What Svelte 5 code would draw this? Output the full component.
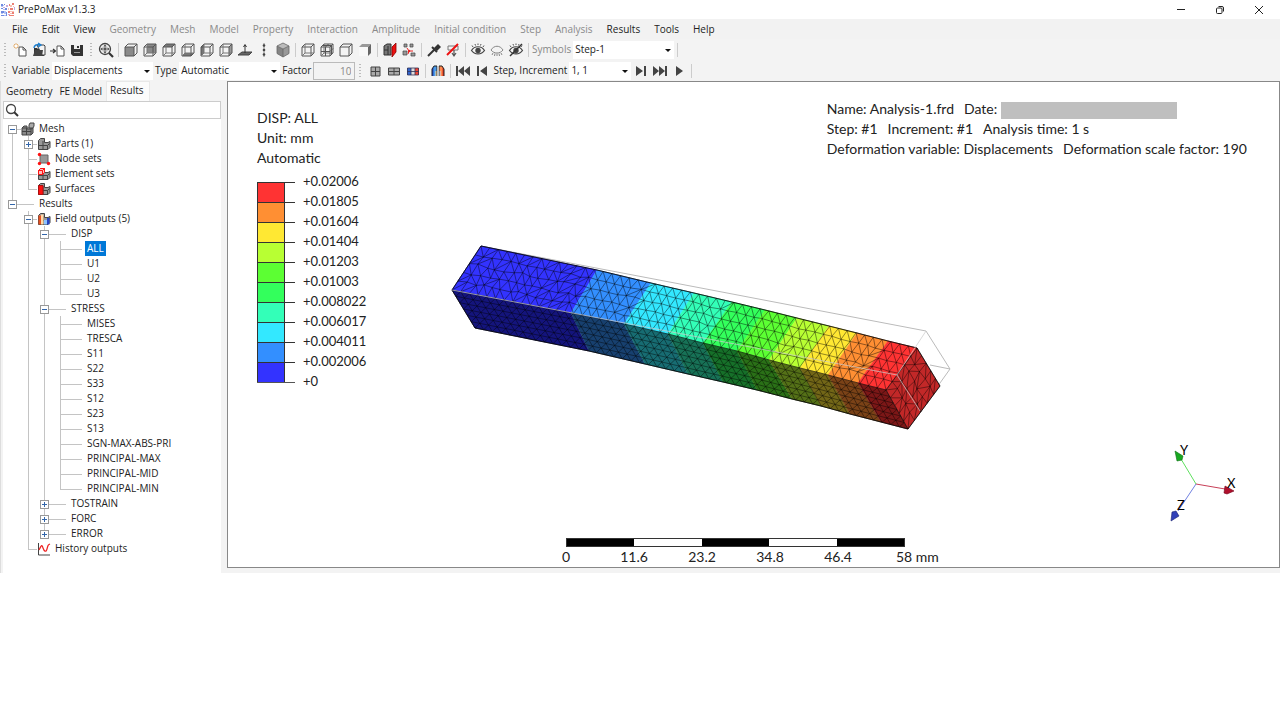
<script>
  const menus = [
    ['File', true], ['Edit', true], ['View', true], ['Geometry', false], ['Mesh', false],
    ['Model', false], ['Property', false], ['Interaction', false], ['Amplitude', false],
    ['Initial condition', false], ['Step', false], ['Analysis', false],
    ['Results', true], ['Tools', true], ['Help', true]
  ];

  const leaf = (label) => ({ label });
  let tree = $state([
    {
      label: 'Mesh', icon: 'mesh', open: true, children: [
        { label: 'Parts (1)', icon: 'part', open: false, children: [] },
        { label: 'Node sets', icon: 'nodes' },
        { label: 'Element sets', icon: 'elements' },
        { label: 'Surfaces', icon: 'surface' }
      ]
    },
    {
      label: 'Results', open: true, children: [
        {
          label: 'Field outputs (5)', icon: 'field', open: true, children: [
            { label: 'DISP', open: true, children: ['ALL', 'U1', 'U2', 'U3'].map(leaf) },
            {
              label: 'STRESS', open: true,
              children: ['MISES', 'TRESCA', 'S11', 'S22', 'S33', 'S12', 'S23', 'S13', 'SGN-MAX-ABS-PRI',
                'PRINCIPAL-MAX', 'PRINCIPAL-MID', 'PRINCIPAL-MIN'].map(leaf)
            },
            { label: 'TOSTRAIN', open: false, children: [] },
            { label: 'FORC', open: false, children: [] },
            { label: 'ERROR', open: false, children: [] }
          ]
        },
        { label: 'History outputs', icon: 'history' }
      ]
    }
  ]);
  let selected = $state('ALL');
  let tab = $state('Results');

  const legendColors = ['#ff3333', '#ff8f33', '#ffe833', '#b8ff33', '#5cff33', '#33ff5c', '#33ffb8', '#33e8ff', '#338fff', '#3333ff'];
  const legendValues = ['+0.02006', '+0.01805', '+0.01604', '+0.01404', '+0.01203', '+0.01003', '+0.008022', '+0.006017', '+0.004011', '+0.002006', '+0'];
  const topColors = [...legendColors].reverse();
  const sideColors = ['#14147c', '#17406f', '#176c72', '#177156', '#167029', '#2a7017', '#547017', '#726617', '#7a4217', '#7c1717'];

  // Beam edges, sampled where the contour bands meet them.
  const back = [[481, 246], [597, 270], [651, 283], [694, 293], [732, 302], [765, 310], [797, 318], [829, 326], [857, 333], [888, 341], [917, 348]];
  const front = [[452, 290], [571, 313], [624, 324], [668, 334], [703, 343], [737, 351], [769, 360], [800, 368], [828, 375], [858, 383], [886, 390]];
  const under = [[475, 328], [589, 351], [645, 364], [688, 374], [723, 382], [757, 390], [792, 399], [821, 406], [850, 414], [881, 422], [908, 429]];

  const pts = (list) => list.map((p) => p.join(',')).join(' ');
  const bands = (a, b, colors) => colors.map((fill, i) => ({ fill, points: pts([a[i], a[i + 1], b[i + 1], b[i]]) }));

  function at(edge, s) {
    const x = edge[0][0] + (edge[10][0] - edge[0][0]) * s;
    let i = 0;
    while (i < 9 && edge[i + 1][0] < x) i++;
    const [x0, y0] = edge[i];
    const [x1, y1] = edge[i + 1];
    return [x, y0 + ((y1 - y0) * (x - x0)) / (x1 - x0)];
  }
  const noise = (n) => { const v = Math.sin(n * 127.1) * 43758.5453; return v - Math.floor(v) - 0.5; };

  // Triangulated wire grid between two edges; lean picks the diagonal.
  function wires(edgeA, edgeB, cols, rows, lean, jitter) {
    const grid = [];
    for (let j = 0; j <= rows; j++) {
      const line = [];
      for (let i = 0; i <= cols; i++) {
        const a = edgeA(i / cols);
        const b = edgeB(i / cols);
        const t = j / rows;
        const k = i > 0 && i < cols && j > 0 && j < rows ? jitter(i) : 0;
        line.push([
          (a[0] + (b[0] - a[0]) * t + noise(i * 13 + j * 7 + 1) * k).toFixed(1),
          (a[1] + (b[1] - a[1]) * t + noise(i * 5 + j * 31 + 2) * k).toFixed(1)
        ]);
      }
      grid.push(line);
    }
    let d = '';
    for (const line of grid) d += 'M' + line.join('L');
    for (let i = 0; i <= cols; i++) d += 'M' + grid.map((line) => line[i]).join('L');
    for (let j = 0; j < rows; j++)
      for (let i = 0; i < cols; i++) {
        const flip = jitter(i) > 2 && noise(i * 3 + j * 11) > 0.2 ? !lean : lean;
        d += flip ? `M${grid[j][i]}L${grid[j + 1][i + 1]}` : `M${grid[j][i + 1]}L${grid[j + 1][i]}`;
      }
    return d;
  }
  const segment = (a, b) => (s) => [a[0] + (b[0] - a[0]) * s, a[1] + (b[1] - a[1]) * s];
  const topWires = wires((s) => at(back, s), (s) => at(front, s), 50, 5, true, (i) => (i < 14 ? 3 : i % 9 < 2 ? 3 : 1));
  const sideWires = wires((s) => at(front, s), (s) => at(under, s), 50, 6, false, () => 0);
  const endWires = wires(segment([917, 348], [940, 386]), segment([886, 390], [908, 429]), 5, 5, true, () => 3);
</script>

{#snippet cube(face)}
  <svg viewBox="0 0 16 16">
    {#if face === 'front'}<path d="M2 5h9v9H2z" fill="#8a8a8a" />{/if}
    {#if face === 'back'}<path d="M5 2h9v9H5z" fill="#8a8a8a" />{/if}
    {#if face === 'top'}<path d="M2 5l3-3h9l-3 3z" fill="#777" />{/if}
    {#if face === 'bottom'}<path d="M2 14l3-3h9l-3 3z" fill="#777" />{/if}
    {#if face === 'left'}<path d="M2 5l3-3v9l-3 3z" fill="#777" />{/if}
    {#if face === 'right'}<path d="M11 5l3-3v9l-3 3z" fill="#999" />{/if}
    <path d="M2 5h9v9H2zM2 5l3-3h9v9l-3 3M11 5l3-3" fill="none" stroke="#555" />
    {#if face !== 'solid' && face !== 'front'}<path d="M5 2v9h9M5 11l-3 3" fill="none" stroke="#777" />{/if}
    {#if face === 'grid'}<path d="M6.500 5v9M2 9.500h9l3-3M6.500 5l3-3M12.500 3.500v9M3.500 3.500h9" fill="none" stroke="#555" />{/if}
  </svg>
{/snippet}

{#snippet tool(name)}
  {#if name.startsWith('cube-')}
    {@render cube(name.slice(5))}
  {:else}
    <svg viewBox="0 0 16 16">
      {#if name === 'new'}
        <path d="M7 5h4l3 3v6H7z" fill="#fff" stroke="#555" /><path d="M11 5v3h3" fill="none" stroke="#555" />
        <path d="M4 1v6M1 4h6M2 2l4 4M6 2L2 6" stroke="#e0a050" stroke-width=".8" /><circle cx="4" cy="4" r="1.300" fill="#fff" />
      {:else if name === 'open'}
        <path d="M3 6h3l1 1h6v7H3z" fill="#333" /><path d="M6 3h7l1 1v9h-3z" fill="#f4f4f4" stroke="#444" /><path d="M2 14l2-6h8l-1 6z" fill="#444" />
        <path d="M3 6c0-3 3-4 6-3M7 1l3 2-3 2" fill="none" stroke="#1d7fd0" stroke-width="1.400" />
      {:else if name === 'import'}
        <path d="M7 4h4l3 3v7H7z" fill="#fff" stroke="#555" /><path d="M11 4v3h3" fill="none" stroke="#555" /><path d="M0 9h5M3 7l2.500 2L3 11" fill="none" stroke="#333" stroke-width="1.200" />
      {:else if name === 'save'}
        <path d="M2 3h12v11H4l-2-2z" fill="#333" /><path d="M5 3h6v4H5z" fill="#eee" /><path d="M8 4h2v2H8z" fill="#333" /><path d="M5 10h6v1H5z" fill="#999" />
      {:else if name === 'fit'}
        <circle cx="7" cy="7" r="5.500" fill="#e8e8e8" stroke="#444" stroke-width="1.300" /><path d="M11 11l4 4" stroke="#333" stroke-width="2.200" />
        <path d="M7 2.500l1.500 2h-3zM7 11.500l1.500-2h-3zM2.500 7l2-1.500v3zM11.500 7l-2-1.500v3z" fill="#333" /><path d="M5.500 5.500h3v3h-3z" fill="#555" />
      {:else if name === 'normal'}
        <path d="M1 13l4-3h10l-3 3z" fill="#666" stroke="#444" /><path d="M8 11V3M6.500 5L8 2.500 9.500 5" stroke="#333" fill="none" />
      {:else if name === 'vertical'}
        <path d="M8 1v14" stroke="#888" /><circle cx="8" cy="3.500" r="1.300" fill="#444" /><circle cx="8" cy="8" r="1.300" fill="#444" /><circle cx="8" cy="12.500" r="1.300" fill="#444" />
      {:else if name === 'iso'}
        <path d="M8 1l6 3-6 3-6-3z" fill="#bbb" /><path d="M2 4l6 3v8l-6-3.500z" fill="#858585" /><path d="M14 4L8 7v8l6-3.500z" fill="#999" />
        <path d="M8 1l6 3v7.500L8 15l-6-3.500V4zM2 4l6 3 6-3M8 7v8" fill="none" stroke="#666" stroke-width=".8" />
      {:else if name === 'shaded'}
        <path d="M2 5l3-3h9l-3 3z" fill="#999" /><path d="M11 5l3-3v9l-3 3z" fill="#666" /><path d="M2 5h9v9H2z" fill="#f8f8f8" />
      {:else if name === 'section'}
        <path d="M2 4l3-2h4v11H2z" fill="#777" stroke="#333" /><path d="M10 5l4-4v9l-4 5z" fill="#e11" stroke="#800" stroke-width=".8" /><path d="M2 8h4M6 4v9" stroke="#333" />
      {:else if name === 'explode'}
        <path d="M3 2h3v3H3zM9 2h3v3H9zM2 9h4v4H2zM10 11h4v3h-4z" fill="#999" stroke="#444" stroke-width=".7" /><path d="M8 9l-2-3M9 9h3M8 9l-1 3" stroke="#e22" /><circle cx="8" cy="9" r="1.200" fill="#e22" />
      {:else if name === 'query'}
        <path d="M2 14l7-7" stroke="#333" stroke-width="2" /><path d="M6 5l5 5" stroke="#333" stroke-width="2" /><path d="M8 6l4-4 3 3-4 4z" fill="#333" />
      {:else if name === 'unquery'}
        <path d="M3 4h10v4H3z" fill="none" stroke="#777" /><path d="M9 8v6M7 11l2 3 2-3" fill="none" stroke="#555" stroke-width="1.200" /><path d="M2 13L13 2" stroke="#e11" stroke-width="2" />
      {:else if name === 'eye' || name === 'eye-off' || name === 'eye-closed'}
        {#if name === 'eye-closed'}
          <path d="M2 8c3-5 9-5 12 0-3 4-9 4-12 0zM4 11l-1 2M8 11.500V14M12 11l1 2M6 11.500L5.500 14M10 11.500l.5 2.500" fill="none" stroke="#888" />
        {:else}
          <path d="M1.500 8.500c3-5 10-5 13 0-3 4.500-10 4.500-13 0z" fill="#f5f5f5" stroke="#444" stroke-width="1.200" /><circle cx="8" cy="8.500" r="2.700" fill="#444" />
          <path d="M3 5L2 3.500M5.500 3.500L5 2M8 3V1.500M10.500 3.500L11 2M13 5l1-1.500" stroke="#555" />
          {#if name === 'eye-off'}<path d="M2 14L14 2" stroke="#333" stroke-width="1.500" />{/if}
        {/if}
      {:else if name === 'grid1'}
        <path d="M4 4h9v9H4z" fill="#aaa" stroke="#444" /><path d="M8.500 4v9M4 8.500h9" stroke="#444" />
      {:else if name === 'grid2'}
        <path d="M2.500 5h11v7h-11z" fill="#aaa" stroke="#444" /><path d="M8 5v7M2.500 8.500h11" stroke="#444" />
      {:else if name === 'grid3'}
        <path d="M2 5h4v7H2z" fill="#36c" /><path d="M6 5h4v7H6z" fill="#ddd" /><path d="M10 5h4v7h-4z" fill="#e43" /><path d="M2.500 5h11v7h-11zM6 5v7M10 5v7M2 8.500h12" stroke="#335" stroke-width=".8" fill="none" />
      {:else if name === 'sides'}
        <path d="M2 13V6l2-3h3v10z" fill="#4a9be8" /><path d="M2 13V6l1.500-2v9z" fill="#2347c0" /><path d="M5.500 8H7v5H5.500z" fill="#ffe0a0" />
        <path d="M14 13V6l-2-3H9v10z" fill="#ff8a50" /><path d="M14 13V6l-1.500-2v9z" fill="#d82a18" /><path d="M9 8h1.500v5H9z" fill="#bfe0ff" />
        <path d="M2 13V6l2-3h3v10M14 13V6l-2-3H9v10" fill="none" stroke="#222" /><path d="M8 2v13" stroke="#f5f5f5" />
      {:else if name === 'first'}
        <path d="M1 3h2v10H1zM9 3v10L3 8zM15 3v10L9 8z" fill="#444" />
      {:else if name === 'prev'}
        <path d="M3 3h2v10H3zM13 3v10L6 8z" fill="#444" />
      {:else if name === 'next'}
        <path d="M11 3h2v10h-2zM3 3v10l7-5z" fill="#444" />
      {:else if name === 'last'}
        <path d="M13 3h2v10h-2zM1 3v10l6-5zM7 3v10l6-5z" fill="#444" />
      {:else if name === 'play'}
        <path d="M5 3v10l7-5z" fill="#444" />
      {/if}
    </svg>
  {/if}
{/snippet}

{#snippet tools(names)}
  {#each names as name}
    <button class="tool" aria-label={name}>{@render tool(name)}</button>
  {/each}
{/snippet}

{#snippet nodeIcon(name)}
  <svg class="node-icon" viewBox="0 0 14 14">
    {#if name === 'mesh'}
      <path d="M1 6l2-2h3v3h4l2-1v5l-2 2H1z" fill="#8a8a8a" stroke="#444" /><path d="M1 9.500h9M5.500 6v7M1 6h9v7" fill="none" stroke="#444" /><path d="M8 3l1-2h4v3l-1 2H8z" fill="#aaa" stroke="#444" />
    {:else if name === 'history'}
      <path d="M1.500 1v12H13" fill="none" stroke="#444" /><path d="M2 8c3-6 3-5 4-2s3 5 4 1 1-4 3-5" fill="none" stroke="#e22" stroke-width="1.200" />
    {:else if name === 'nodes'}
      <path d="M3 3h8v8H3z" fill="#999" stroke="#666" /><circle cx="2.500" cy="2.500" r="1.700" fill="#f11" /><circle cx="2.500" cy="11.500" r="1.700" fill="#f11" /><circle cx="11.500" cy="11.500" r="1.700" fill="#f11" />
    {:else}
      <path d="M1.500 3.500l2-2h4v4H11l2-1v6l-2 2H1.500z" fill="#999" stroke="#444" /><path d="M1.500 8.500h9v4M6 4v8.500M10.500 8.500l2-2" fill="none" stroke="#444" />
      {#if name === 'elements'}<path d="M1.500 3.500l2-2h4v4l-2 2h-4zM1.500 3.500h4v4M5.500 3.500l2-2" fill="#fbb" stroke="#f11" />{/if}
      {#if name === 'surface'}<path d="M1.500 3.500H6v9H1.500z" fill="#f11" stroke="#a11" />{/if}
      {#if name === 'field'}<path d="M1.500 3.500H4v9H1.500z" fill="#e65020" /><path d="M4 2.500h2.500v10H4z" fill="#ffd9a8" /><path d="M7 8h3v4.500H7z" fill="#8fc4ff" /><path d="M10 6h2.500v6.500H10z" fill="#2747c8" />{/if}
    {/if}
  </svg>
{/snippet}

{#snippet branch(items)}
  <ul>
    {#each items as item}
      <li class:wide={!item.icon}>
        <div class="row">
          {#if item.children}
            <button class="toggle" aria-label="Toggle {item.label}" onclick={() => (item.open = !item.open)}>
              <svg viewBox="0 0 7 7"><path d={item.open ? 'M1 3.500h5' : 'M1 3.500h5M3.500 1v5'} stroke="#36a" /></svg>
            </button>
          {/if}
          {#if item.icon}{@render nodeIcon(item.icon)}{/if}
          <button class="label" class:selected={selected === item.label} onclick={() => (selected = item.label)}>{item.label}</button>
        </div>
        {#if item.open}{@render branch(item.children)}{/if}
      </li>
    {/each}
  </ul>
{/snippet}

<div class="window">
  <header class="title">
    <svg class="logo" viewBox="0 0 16 16">
      <path d="M1 2h2v2H1zM4 2h1v1H4zM1 6h2v1H1zM5 6h2v2H5zM1 9h3v2H1zM6 10h1v4H6zM1 13h3v1H1z" fill="#6f8ae0" />
      <path d="M9 2h1v2H9zM12 1h2v2h-2zM10 6h3v2h-3zM8 9h2v2H8zM12 10h2v2h-2zM9 13h5v1H9z" fill="#ec8074" />
      <path d="M6 3h2v2H6zM3 5h2v1H3zM8 12h2v1H8zM14 5h1v3h-1z" fill="#c9a8d8" />
      <path d="M3 3h1v1H3zM1 4h2v1H1zM3 7h2v1H3zM4 9h2v3H4zM1 11h2v1H1zM4 13h2v1H4z" fill="#b4c4f4" />
      <path d="M10 3h2v2h-2zM13 4h1v1h-1zM8 6h1v2H8zM10 9h4v1h-4zM10 11h2v1h-2z" fill="#f8c0b4" />
    </svg>
    <span>PrePoMax v1.3.3</span>
    <div class="window-buttons">
      <button aria-label="Minimize"><svg viewBox="0 0 10 10"><path d="M1 4.500h8" /></svg></button>
      <button aria-label="Restore"><svg viewBox="0 0 10 10"><rect x="1.500" y="3" width="5.500" height="5.500" rx="1" /><path d="M3.500 1.500H7a1.500 1.500 0 0 1 1.500 1.500v3.500" /></svg></button>
      <button aria-label="Close"><svg viewBox="0 0 10 10"><path d="M1 1l8 8M9 1L1 9" /></svg></button>
    </div>
  </header>

  <nav class="menu">
    {#each menus as [name, enabled]}<button disabled={!enabled}>{name}</button>{/each}
  </nav>

  <div class="toolbar">
    <i class="grip"></i>
    {@render tools(['new', 'open', 'import', 'save'])}
    <i class="grip inner"></i>
    {@render tools(['fit'])}<i class="sep"></i>
    {@render tools(['cube-front', 'cube-back', 'cube-top', 'cube-bottom', 'cube-left', 'cube-right', 'normal', 'vertical', 'iso'])}<i class="sep"></i>
    {@render tools(['cube-wire', 'cube-grid', 'cube-solid', 'shaded'])}<i class="sep"></i>
    {@render tools(['section', 'explode'])}<i class="sep"></i>
    {@render tools(['query', 'unquery'])}<i class="sep"></i>
    {@render tools(['eye', 'eye-closed', 'eye-off'])}<i class="sep"></i>
    <label class="muted" for="symbols">Symbols</label>
    <span class="select"><select id="symbols"><option>Step-1</option></select></span><i class="sep"></i>
  </div>

  <div class="toolbar fields">
    <i class="grip"></i>
    <label for="variable">Variable</label>
    <span class="select"><select id="variable"><option>Displacements</option></select></span>
    <label for="type">Type</label>
    <span class="select"><select id="type"><option>Automatic</option></select></span>
    <label for="factor">Factor</label>
    <input id="factor" class="factor" value="10" disabled />
    <i class="grip inner"></i>
    {@render tools(['grid1', 'grid2', 'grid3'])}<i class="sep"></i>
    {@render tools(['sides'])}<i class="sep"></i>
    {@render tools(['first', 'prev'])}
    <label for="increment">Step, Increment</label>
    <span class="select small"><select id="increment"><option>1, 1</option></select></span>
    {@render tools(['next', 'last', 'play'])}<i class="sep"></i>
  </div>

  <main>
    <aside>
      <div class="tabs" role="tablist">
        {#each ['Geometry', 'FE Model', 'Results'] as name}
          <button role="tab" aria-selected={tab === name} onclick={() => (tab = name)}>{name}</button>
        {/each}
      </div>
      <div class="search">
        <svg viewBox="0 0 14 14"><circle cx="6" cy="6" r="4.500" fill="none" stroke="#444" stroke-width="1.300" /><path d="M9 9l4 4" stroke="#333" stroke-width="2" /></svg>
        <input type="search" aria-label="Search tree" />
      </div>
      <div class="tree">{@render branch(tree)}</div>
    </aside>

    <section class="view">
      <svg class="beam" viewBox="440 235 520 205">
        <path d="M481 246L926 331L950 369L930 365M950 369L920 411" fill="none" stroke="#bbb" />
        {#each bands(front, under, sideColors) as band}<polygon points={band.points} fill={band.fill} stroke={band.fill} stroke-width=".5" />{/each}
        {#each bands(back, front, topColors) as band}<polygon points={band.points} fill={band.fill} stroke={band.fill} stroke-width=".5" />{/each}
        <polygon points="917,348 940,386 908,429 886,390" fill="#c22828" />
        <g fill="none" stroke="#000">
          <path d={topWires} stroke-opacity=".62" stroke-width=".7" />
          <path d={sideWires} stroke-opacity=".6" stroke-width=".7" />
          <path d={endWires} stroke-opacity=".6" stroke-width=".7" />
          <g stroke-width=".7">
            <polyline points={pts(back)} /><polyline points={pts(under)} />
            <path d="M481 246L452 290L475 328M917 348L940 386L908 429" />
          </g>
        </g>
        <path d="M452 290L897 375L920 411M897 375L926 331" fill="none" stroke="#ccc" stroke-opacity=".8" stroke-width=".9" />
      </svg>

      <div class="legend">
        <p>DISP: ALL</p><p>Unit: mm</p><p>Automatic</p>
        <div class="scale">
          <div class="swatches">
            {#each legendColors as color}<i><b style:background={color}></b></i>{/each}
          </div>
          <div class="values">{#each legendValues as value}<span>{value}</span>{/each}</div>
        </div>
      </div>

      <div class="info">
        <p><span>Name: Analysis-1.frd</span><span>Date:<i class="redacted"></i></span></p>
        <p><span>Step: #1</span><span>Increment: #1</span><span>Analysis time: 1 s</span></p>
        <p><span>Deformation variable: Displacements</span><span>Deformation scale factor: 190</span></p>
      </div>

      <div class="ruler">
        <div class="bar"><i></i><i></i><i></i><i></i><i></i></div>
        <div class="marks">
          {#each ['0', '11.6', '23.2', '34.8', '46.4'] as mark}<span>{mark}</span>{/each}
          <span class="end">58 mm</span>
        </div>
      </div>

      <svg class="triad" viewBox="1160 435 85 95">
        <path d="M1196 484L1181 459" stroke="#5fe05f" /><path d="M1196 484L1225 489" stroke="#c84058" /><path d="M1196 484L1178 511" stroke="#7080e0" />
        <path d="M1175 451l8 5-1 4-5 1z" fill="#18a820" stroke="#0c7012" stroke-width=".6" />
        <path d="M1234 491l-9-5-1 7 3 1z" fill="#b0102c" stroke="#700018" stroke-width=".6" />
        <path d="M1171 521l1-9 4-1 3 5z" fill="#3040b8" stroke="#182070" stroke-width=".6" />
        <text x="1180" y="455">Y</text><text x="1227" y="488">X</text><text x="1177" y="510">Z</text>
      </svg>
    </section>
  </main>
</div>

<style>
  :global(body) { margin: 0; background: #fff; }
  .window { font: 10px/15px "Open Sans", "Noto Sans", sans-serif; color: #222; background: #f3f3f3; }
  button, input, select { font: inherit; color: inherit; border: 0; padding: 0; margin: 0; background: none; border-radius: 0; }
  svg { display: block; }
  ul, p { margin: 0; padding: 0; list-style: none; }

  .title { display: flex; align-items: center; height: 19px; background: #fff; padding-right: 2px; }
  .logo { width: 16px; height: 16px; margin-right: 2px; }
  .window-buttons { display: flex; margin-left: auto; }
  .window-buttons button { width: 39px; display: flex; justify-content: center; }
  .window-buttons svg { width: 10px; height: 10px; fill: none; stroke: #222; }

  .menu { display: flex; gap: 14px; height: 20px; padding-left: 12px; align-items: center; background: #f2f2f2; }
  .menu button:disabled { color: #8a8a8a; }

  .toolbar { display: flex; align-items: center; height: 21px; padding-left: 4px; }
  .grip { width: 2px; height: 13px; margin-right: 4px; background: repeating-linear-gradient(#bbb 0 1px, transparent 1px 3px); }
  .grip.inner { margin: 0 4px; }
  .sep { width: 1px; height: 14px; margin: 0 2px 0 3px; background: #ccc; }
  .tool { width: 19px; height: 18px; display: flex; align-items: center; justify-content: center; }
  .tool svg { width: 16px; height: 16px; }
  .toolbar label { margin: 0 2px 0 1px; white-space: nowrap; }
  .toolbar.fields label { margin: 0 2px; }
  .muted { color: #888; }
  .select { position: relative; background: #fff; width: 101px; height: 18px; }
  .select.small { width: 62px; }
  .select select { appearance: none; width: 100%; height: 18px; padding-left: 2px; }
  .select::after { content: ""; position: absolute; right: 3px; top: 8px; border: 3px solid transparent; border-top-color: #111; border-bottom: 0; pointer-events: none; }
  .factor { box-sizing: border-box; width: 42px; height: 18px; border: 1px solid #bbb; padding-right: 3px; text-align: right; color: #888; }

  main { display: flex; align-items: stretch; }
  aside { width: 227px; flex: none; box-sizing: border-box; padding: 0 6px 0 2px; border-left: 1px solid #ddd; }
  .tabs { display: flex; height: 20px; align-items: stretch; }
  .tabs button { padding: 1px 4px 0 3px; }
  .tabs button[aria-selected="true"] { background: #fbfbfb; border: 1px solid #e8e8e8; border-bottom: 0; padding: 0 5px 3px 3px; }
  .search { display: flex; align-items: center; height: 16px; border: 1px solid #ccc; background: #fff; }
  .search svg { width: 14px; height: 14px; margin-left: 1px; }
  .search input { flex: 1; min-width: 0; outline: 0; }
  .tree { background: #fff; padding: 2px 0 17px; }
  .tree ul ul { padding-left: 16px; }
  li { position: relative; }
  li::before { content: ""; position: absolute; left: 9px; top: 0; bottom: 0; border-left: 1px solid #c4c4c4; }
  li:last-child::before { bottom: auto; height: 8px; }
  .tree > ul > li:first-child::before { top: 8px; }
  .row { position: relative; display: flex; align-items: center; height: 15px; padding-left: 34px; }
  .row::before { content: ""; position: absolute; left: 9px; top: 8px; width: 9px; border-top: 1px solid #c4c4c4; }
  .wide > .row::before { width: 22px; }
  .toggle { position: absolute; left: 5px; top: 4px; width: 9px; height: 9px; background: #fff; border: 1px solid #999; }
  .toggle svg { width: 7px; height: 7px; }
  .node-icon { width: 14px; height: 14px; position: absolute; left: 18px; top: 1px; }
  .label { padding: 0 2px; white-space: nowrap; }
  .label.selected { background: #0078d7; color: #fff; }

  .view { flex: 1; min-width: 0; display: grid; background: #fff; border: 1px solid #888; margin-bottom: 5px; font: 14px/20px Lato, sans-serif; color: #222; }
  .view > * { grid-area: 1 / 1; }
  .beam { width: 520px; height: 205px; place-self: start center; margin: 153px 107px 0 0; }
  .legend { place-self: start; padding: 26px 0 0 29px; }
  .scale { display: flex; margin-top: 3px; }
  .swatches { width: 38px; margin: 11px 8px 0 0; border-bottom: 1px solid #555; height: 200px; }
  .swatches i { display: block; height: 20px; box-sizing: border-box; border-top: 1px solid #333; }
  .swatches b { display: block; width: 26px; height: 19px; border: solid #333; border-width: 0 1px; }
  .values { font-size: 13px; }
  .values span { display: block; }
  .info { place-self: start end; padding: 17px 32px 0 0; }
  .info p { display: flex; gap: 10px; white-space: pre; height: 20px; }
  .redacted { display: inline-block; width: 176px; height: 17px; margin-left: 4px; background: #bfbfbf; vertical-align: middle; }
  .ruler { place-self: end center; width: 339px; margin: 0 36px 0 0; }
  .bar { display: flex; height: 7px; border: 1px solid #333; }
  .bar i { flex: 1; }
  .bar i:nth-child(odd) { background: #000; }
  .marks { display: grid; grid-template-columns: repeat(6, 68px); margin-left: -34px; text-align: center; }
  .marks .end { text-align: left; padding-left: 24px; white-space: nowrap; }
  .triad { width: 85px; height: 95px; place-self: end; margin: 0 34px 37px 0; font: 13px Lato, sans-serif; }
</style>
